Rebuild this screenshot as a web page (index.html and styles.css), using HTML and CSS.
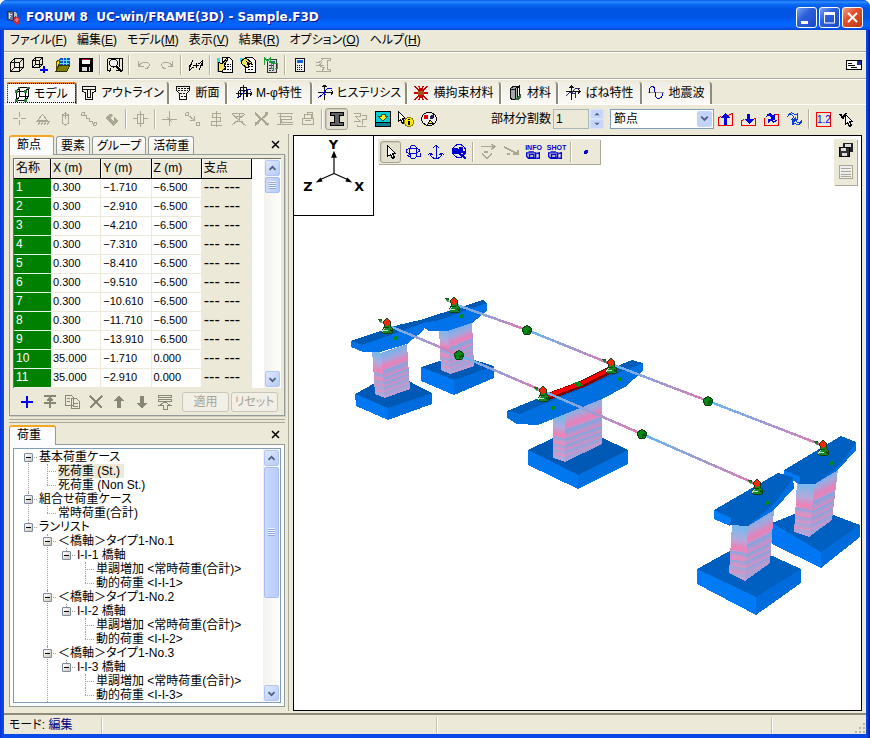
FILE: index.html
```html
<!DOCTYPE html>
<html lang="ja">
<head>
<meta charset="utf-8">
<title>FORUM 8 UC-win/FRAME(3D) - Sample.F3D</title>
<link rel="stylesheet" href="styles.css">
</head>
<body>
<div class="window">
<header class="titlebar">
  <svg class="ico" viewBox="0 0 16 16"><path d="M1 2l6 1v9l-6-2z" fill="#68738a" stroke="#27324c"/><path d="M3 4v6M3 5h3M3 7h2" stroke="#d7e4f5"/><path d="M8 3l3 1v4H8z" fill="#b7bfce"/><path d="M9 7l5 2v4l-3 3-4-3z" fill="#b52d46"/><path d="M10 9l3 1-2 4-2-2z" fill="#f06d7c"/></svg>
  <h1>FORUM 8&nbsp; UC-win/FRAME(3D) - Sample.F3D</h1>
  <div class="winbtns">
    <button aria-label="最小化"><svg viewBox="0 0 19 19"><path d="M4 13h7v3H4z" fill="#fff"/></svg></button>
    <button aria-label="最大化"><svg viewBox="0 0 19 19"><path d="M4.500 5v10h10V5z" fill="none" stroke="#fff"/><path d="M4 4h11v3H4z" fill="#fff"/></svg></button>
    <button class="close" aria-label="閉じる"><svg viewBox="0 0 19 19"><path d="M5 5l9 9M14 5l-9 9" stroke="#fff" stroke-width="2"/></svg></button>
  </div>
</header>
<div class="client">
<nav class="menubar">
  <a href="#">ファイル(<u>F</u>)</a><a href="#">編集(<u>E</u>)</a><a href="#">モデル(<u>M</u>)</a><a href="#">表示(<u>V</u>)</a><a href="#">結果(<u>R</u>)</a><a href="#">オプション(<u>O</u>)</a><a href="#">ヘルプ(<u>H</u>)</a>
</nav>
<div class="toolbar top">
  <button class="tb" aria-label="新規"><svg class="ico" viewBox="0 0 16 16"><path d="M1.500 5.500h9v9h-9zM5.500 1.500h9v9h-9zM1.500 5.500l4-4M10.500 5.500l4-4M10.500 14.500l4-4M1.500 14.500l4-4" fill="none" stroke="#000"/></svg></button>
  <button class="tb" aria-label="追加"><svg class="ico" viewBox="0 0 16 16"><path d="M.5 3.500h7v7h-7zM3.500.5h7v7h-7zM.5 3.500l3-3M7.500 3.500l3-3M.5 10.500l3-3M7.500 10.500l3-3" fill="none" stroke="#000"/><path d="M12 9v7M8 12.500h8" stroke="#0000e8" stroke-width="2"/></svg></button>
  <button class="tb" aria-label="開く"><svg class="ico" viewBox="0 0 16 16"><path d="M1 5l3-2v4l-3 6z" fill="#ffe800" stroke="#554f00"/><path d="M5 1h10v7H4z" fill="#2448d0"/><path d="M5 3.500h10M5 6h9M8 1v7M11.500 1v7" stroke="#55e5ff"/><path d="M1 14l3-6h11l-3 6z" fill="#808000" stroke="#333300"/></svg></button>
  <button class="tb" aria-label="保存"><svg class="ico" viewBox="0 0 16 16"><path d="M1 1h13l1 1v13H1z"/><path d="M4 2h8v5H4z" fill="#fff"/><path d="M4 2h8v1H4z" fill="#d00030"/><path d="M4 10h8v4H4z" fill="#ddd"/><path d="M9 10h2v4H9z"/></svg></button>
  <i class="sep"></i>
  <button class="tb" aria-label="プレビュー"><svg class="ico" viewBox="0 0 16 16"><path d="M.5 1.500h15v12H9M.5 1.500v12H4M12.500 2v8" fill="none" stroke="#000"/><circle cx="6.500" cy="6" r="4" fill="#eee" stroke="#000"/><path d="M9 9l6 6" stroke="#000" stroke-width="2"/><path d="M4 11l-2 4" stroke="#000"/></svg></button>
  <i class="sep"></i>
  <button class="tb off" aria-label="元に戻す"><svg class="ico" viewBox="0 0 16 16"><path d="M2.500 4v5h5M3 9c3-6 12-4 10 0-1 2-2 3-4 3" fill="none" stroke="#aaa793"/></svg></button>
  <button class="tb off" aria-label="やり直し"><svg class="ico" viewBox="0 0 16 16"><path d="M13.500 4v5h-5M13 9C10 3 1 5 3 9c1 2 2 3 4 3" fill="none" stroke="#aaa793"/></svg></button>
  <i class="sep"></i>
  <button class="tb" aria-label="符号"><svg class="ico" viewBox="0 0 16 16"><path d="M1 12l4-9M1.500 8v5l4-3M11 13l4-9M14.500 9V4l-4 3M5 8.500h6M8.500 6v5" fill="none" stroke="#000"/></svg></button>
  <i class="sep"></i>
  <button class="tb" aria-label="入力"><svg class="ico" viewBox="0 0 16 16"><path d="M5.500.5h7l3 3v12h-10z" fill="#fff" stroke="#000"/><path d="M7 7.500h7M7 9.500h7M7 12.500h7" stroke="#000" stroke-dasharray="2 1"/><path d="M0 1h3v14H0z" fill="#36d8e2"/><path d="M1 5l4 2 5-6 1 1-4 6 2 3-4 3H1z" fill="#f4e45b" stroke="#000"/></svg></button>
  <button class="tb" aria-label="出力"><svg class="ico" viewBox="0 0 16 16"><path d="M5.500.5h7l3 3v12h-10z" fill="#fff" stroke="#000"/><path d="M8 7.500h6M8 9.500h6M8 12.500h6" stroke="#000" stroke-dasharray="2 1"/><path d="M0 1h4v4H0z" fill="#36d8e2"/><path d="M1 4l5-3 6 5-2 1-3-2 2 5-2 1-5-4z" fill="#f4e45b" stroke="#000"/></svg></button>
  <button class="tb" aria-label="計算"><svg class="ico" viewBox="0 0 16 16"><path d="M4.500 2.500h9v13h-9z" fill="#ddd" stroke="#333"/><path d="M6 4h6v2H6z" fill="#267b7b"/><path d="M6 8.500h6M6 11.500h6M6 13.500h6" stroke="#333" stroke-dasharray="2 1"/><path d="M1.500 8V1l3 3 3-3v5M10.500 5v9M8 9c0-4 7-4 7 0s-7 4-7 0" fill="none" stroke="#16a338"/></svg></button>
  <i class="sep"></i>
  <button class="tb" aria-label="電卓"><svg class="ico" viewBox="0 0 16 16"><path d="M3.500 1.500h9v13h-9z" fill="#ececec" stroke="#111"/><path d="M5 3h6v3H5z" fill="#1264d8"/><path d="M5 8.500h6M5 10.500h6M5 12.500h6" stroke="#111" stroke-dasharray="1 1"/></svg></button>
  <button class="tb off" aria-label="断面計算"><svg class="ico" viewBox="0 0 16 16"><path d="M6 1.500h9v2h-3v9h3v2H6M1 5.500h3l4-3M1 8.500h8M1 14.500h6l2-4-4-1M7 5l-3 4" fill="none" stroke="#aaa793"/></svg></button>
  <button class="tb mail" aria-label="メール"><svg class="ico" viewBox="0 0 16 16"><path d="M.5 3.500h15v9H.5z" fill="#fff" stroke="#000"/><path d="M2 6.500h4M2 8.500h7M5 10.500h6" stroke="#000"/><path d="M11 4h4v4h-4z" fill="#1c2f9a"/></svg></button>
</div>
<div class="modes" role="tablist">
  <button class="mode on" role="tab"><svg class="ico" viewBox="0 0 16 16"><path d="M2.500 5.500h9v9h-9zM5.500 1.500h9v9h-9zM2.500 5.500l3-4M11.500 5.500l3-4M11.500 14.500l3-4M2.500 14.500l3-4" fill="none" stroke="#000"/><path d="M1 4h3v3H1zM10 4h3v3h-3zM1 13h3v3H1zM10 13h3v3h-3zM4 1h2v2H4zM13 1h3v2h-3z" fill="#27823c"/></svg>モデル</button>
  <button class="mode" role="tab"><svg class="ico" viewBox="0 0 16 16"><path d="M1 1.500h14M1.500 1v5l3 2v6h7V8l3-2V1M1.500 4.500h13M6.500 5v7h3V5" fill="none" stroke="#111"/></svg>アウトライン</button>
  <button class="mode" role="tab"><svg class="ico" viewBox="0 0 16 16"><path d="M1.500 1.500h13v4l-3 3v6h-7v-6l-3-3z" fill="none" stroke="#111"/><path d="M3 3.500h11M3 5.500h10M5 8.500h7M6 11.500h5" stroke="#111" stroke-dasharray="2 1"/></svg>断面</button>
  <button class="mode" role="tab"><svg class="ico" viewBox="0 0 16 16"><path d="M7.500 0v15M0 8.500h16M2.500 5.500h9v6M2.500 11V5.500M4.500 11.500v-9h6v9" fill="none" stroke="#111"/><path d="M1 13c5-2 5-8 14-9" fill="none" stroke="#0000a8"/><path d="M14 6l2 2.500-2 2" fill="none" stroke="#111"/></svg>M-φ特性</button>
  <button class="mode" role="tab"><svg class="ico" viewBox="0 0 16 16"><path d="M7.500 0v15M1 7.500h15M5.500 2l2-2 2 2M14 5l2 2.500-2 2" fill="none" stroke="#111"/><path d="M1 13l4-3 6-7h4M5 7l4 3" fill="none" stroke="#0000c8"/></svg>ヒステリシス</button>
  <button class="mode" role="tab"><svg class="ico" viewBox="0 0 16 16"><path d="M2 1l5 6M6 1l2 6M10 1L8 7M14 1L9 7M1 8h14M2 15l5-6M6 15l2-6M10 15L8 9M14 15L9 9" stroke="#c40000" stroke-width="1.500"/><path d="M5 6h6v4H5z" fill="#a6501e"/></svg>横拘束材料</button>
  <button class="mode" role="tab"><svg class="ico" viewBox="0 0 16 16"><path d="M3 4l4-3h5l-2 4v8l-4 2-3-2z" fill="#a7aaaa" stroke="#111"/><path d="M3 4.500h5.500v9M8 4l4-3v9" fill="none" stroke="#111"/><path d="M8 15l6-7v4l-3 3z" fill="#2d6b39"/></svg>材料</button>
  <button class="mode" role="tab"><svg class="ico" viewBox="0 0 16 16"><path d="M6.500 1v14M1 6.500h14M4.500 3l2-2 2 2M13 4l2 2.500-2 2" fill="none" stroke="#111"/><path d="M1 11l4-4 5 2M10.500 7v6M10 3.500h5M7 7l4-4" fill="none" stroke="#292963"/></svg>ばね特性</button>
  <button class="mode" role="tab"><svg class="ico" viewBox="0 0 16 16"><path d="M0 7.500h16" stroke="#999"/><path d="M1 8C1 0 7-1 7 7s6 9 8 1" fill="none" stroke="#0000c0"/></svg>地震波</button>
</div>
<div class="toolbar second">
  <button class="tb off" aria-label="節点"><svg class="ico" viewBox="0 0 16 16"><path d="M7.500 1v5M7.500 9v5M1 7.500h5M9 7.500h5" class="g"/></svg></button>
  <button class="tb off" aria-label="支点"><svg class="ico" viewBox="0 0 16 16"><path d="M7.500 3.500l5 6h-10zM1 10.500h14M3 14l2-3M6 14l2-3M9 14l2-3M12 14l2-3" class="g"/></svg></button>
  <button class="tb off" aria-label="剛体"><svg class="ico" viewBox="0 0 16 16"><path d="M4.500 4v8l3 2 3-2V4l-3-2zM4.500 4l3 1 3-1M7.500 2v6" class="g"/></svg></button>
  <button class="tb off" aria-label="ばね"><svg class="ico" viewBox="0 0 16 16"><circle cx="2" cy="3" r="1.500" class="g"/><circle cx="14" cy="13" r="1.500" class="g"/><path d="M3 4.500h2.500v3h3v3h3v2h2" class="g"/></svg></button>
  <button class="tb off" aria-label="塗り"><svg class="ico" viewBox="0 0 16 16"><path d="M1 7l5-4 3 1-3 3 4 3V6l5 4-6 5-5-5z" fill="#aaa793"/></svg></button>
  <i class="sep"></i>
  <button class="tb off" aria-label="要素"><svg class="ico" viewBox="0 0 16 16"><path d="M4.500 3.500h6v9h-6zM7.500 0v16M0 7.500h4M11 7.500h4" class="g"/></svg></button>
  <i class="sep"></i>
  <button class="tb off" aria-label="分割"><svg class="ico" viewBox="0 0 16 16"><path d="M7.500 0v15M0 8.500h15M5 6l5 5" class="g"/></svg></button>
  <button class="tb off" aria-label="移動"><svg class="ico" viewBox="0 0 16 16"><circle cx="2" cy="3" r="1.500" class="g"/><circle cx="13" cy="13" r="2" class="g"/><path d="M3 4l6 5M5 9.500h4.500V5" class="g"/></svg></button>
  <button class="tb off" aria-label="接続"><svg class="ico" viewBox="0 0 16 16"><path d="M13 2.500H4.500v4h8v4h-9v4h10M8.500 0v16" class="g"/></svg></button>
  <button class="tb off" aria-label="反転"><svg class="ico" viewBox="0 0 16 16"><path d="M1 2.500h12M1 14L14 3M1 3l14 12M4 5.500h8M5 10.500h7M8.500 2v8" class="g"/></svg></button>
  <button class="tb off" aria-label="交差"><svg class="ico" viewBox="0 0 16 16"><path d="M1 2l13 12M1 14L14 2M11 2h3M11 13h4M1 12h4" class="g" stroke-width="2"/></svg></button>
  <button class="tb off" aria-label="表"><svg class="ico" viewBox="0 0 16 16"><path d="M0 2.500h16M0 13.500h16M3.500 2v12M2 5.500h12.500v3H4.500v3h11" class="g"/></svg></button>
  <button class="tb off" aria-label="保管"><svg class="ico" viewBox="0 0 16 16"><path d="M2.500 7.500h11v6h-11zM4.500 7V3.500h7V7M7.500 3V1.500h5V7M5 9.500h6" class="g"/></svg></button>
  <i class="sep"></i>
  <button class="tb pressed" aria-label="断面表示"><svg class="ico" viewBox="0 0 16 16"><path d="M1.500 1.500h13v3h-4v7h4v3h-13v-3h4v-7h-4z" fill="#5f6264" stroke="#000"/></svg></button>
  <button class="tb off" aria-label="荷重表示"><svg class="ico" viewBox="0 0 16 16"><path d="M2 2.500h6v3H4l4 5H2M10 4.500h4v4h-4v5M5 13.500v2h9" class="g"/></svg></button>
  <button class="tb" aria-label="ダウンロード"><svg class="ico" viewBox="0 0 16 16"><path d="M.5.5h15v11H.5z" fill="#00cfd5" stroke="#000"/><path d="M.5 11.500h15v4H.5z" fill="#087e98" stroke="#000"/><path d="M6 3h4v2h3L8 10 3 5h3z" fill="#fff318" stroke="#444"/></svg></button>
  <button class="tb" aria-label="情報"><svg class="ico" viewBox="0 0 16 16"><path d="M.5.5v10l2-2 2 4 2-1-2-4h3z" fill="#fff" stroke="#000"/><circle cx="11" cy="11" r="4.500" fill="#ffec00" stroke="#887900"/><path d="M10 8h2v1h-2zM10 10h2v4h-2z"/></svg></button>
  <button class="tb" aria-label="表示設定"><svg class="ico" viewBox="0 0 16 16"><ellipse cx="8" cy="8" rx="7.500" ry="6.500" fill="#eee" stroke="#000"/><path d="M3 4h4v4H3z" fill="#d00"/><circle cx="11" cy="6" r="2" fill="#225"/><path d="M7 13l2-4 3 3z" fill="#ffe000" stroke="#000"/></svg></button>
  <label class="divlabel" for="division">部材分割数</label>
  <div class="spin"><input id="division" type="text" value="1" readonly><div class="spinbtns"><button aria-label="増やす"><svg viewBox="0 0 12 9"><path d="M3 6l3-3 3 3z" fill="#4d6185"/></svg></button><button aria-label="減らす"><svg viewBox="0 0 12 9"><path d="M3 3l3 3 3-3z" fill="#4d6185"/></svg></button></div></div>
  <div class="combo"><select aria-label="対象"><option>節点</option></select><svg class="arrow" viewBox="0 0 15 17"><path d="M4 6l3.500 3.500L11 6" fill="none" stroke="#4d6185" stroke-width="2"/></svg></div>
  <div class="steps">
    <button class="tb" aria-label="上へ"><svg class="ico" viewBox="0 0 16 16"><path d="M.5 6v8.500h14V2.500l-5 2M.5 6.500l3-1" fill="none" stroke="#e00"/><path d="M7.500 2l5 5H9v7H6V7H3z" fill="#0000e0"/></svg></button>
    <button class="tb" aria-label="下へ"><svg class="ico" viewBox="0 0 16 16"><path d="M.5 9v5.500h14V7.500l-3 1M.5 9.500l3-1" fill="none" stroke="#e00"/><path d="M6 3h3v5h4l-5 5-5-5h3z" fill="#0000e0"/></svg></button>
    <button class="tb" aria-label="循環"><svg class="ico" viewBox="0 0 16 16"><path d="M.5 7v7.500h14V3.500h-4" fill="none" stroke="#e00"/><path d="M2 6c1-4 5-5 7-2l2-1v6H5l2-2C5 4 4 4 2 6zM14 7c-1 5-5 6-7 3l-3 2V8h5l-1 1c2 2 4 1 6-2z" fill="#0000e0"/></svg></button>
    <button class="tb" aria-label="更新"><svg class="ico" viewBox="0 0 16 16"><path d="M1 5c1-4 5-4 7-1l2-1v5H5l2-2C5 3 3 3 1 5zM15 9c-1 5-5 6-7 3l-3 2V8h5l-1 2c2 2 4 2 6-1z" fill="none" stroke="#0c3ed8"/><path d="M6 8l3-2v2zM6 9l3 0-3 3z" fill="#0c3ed8"/></svg></button>
    <i class="sep"></i>
    <button class="tb" aria-label="小数"><span class="decimal">1.2</span></button>
    <button class="tb" aria-label="選択確定"><svg class="ico" viewBox="0 0 16 16"><path d="M1 3l3 4 3-5" fill="none" stroke="#000" stroke-width="2"/><path d="M6.500 3.500l7 7h-3l2 4-2 1-2-4-2 2z" fill="#fff" stroke="#000"/></svg></button>
  </div>
</div>
<main class="work">
  <aside class="side">
    <section class="panel nodes">
      <div class="ptabs"><button class="ptab on">節点</button><button class="ptab">要素</button><button class="ptab">グループ</button><button class="ptab">活荷重</button><button class="x" aria-label="閉じる"><svg viewBox="0 0 9 9"><path d="M1 1l7 7M8 1L1 8" stroke="#000" stroke-width="1.500"/></svg></button></div>
      <div class="pbody">
        <div class="gridbox">
          <table>
            <colgroup><col class="cn"><col><col><col><col></colgroup>
            <thead><tr><th>名称</th><th>X (m)</th><th>Y (m)</th><th>Z (m)</th><th>支点</th></tr></thead>
            <tbody>
            <tr><th>1</th><td>0.300</td><td>−1.710</td><td>−6.500</td><td>--- ---</td></tr>
            <tr><th>2</th><td>0.300</td><td>−2.910</td><td>−6.500</td><td>--- ---</td></tr>
            <tr><th>3</th><td>0.300</td><td>−4.210</td><td>−6.500</td><td>--- ---</td></tr>
            <tr><th>4</th><td>0.300</td><td>−7.310</td><td>−6.500</td><td>--- ---</td></tr>
            <tr><th>5</th><td>0.300</td><td>−8.410</td><td>−6.500</td><td>--- ---</td></tr>
            <tr><th>6</th><td>0.300</td><td>−9.510</td><td>−6.500</td><td>--- ---</td></tr>
            <tr><th>7</th><td>0.300</td><td>−10.610</td><td>−6.500</td><td>--- ---</td></tr>
            <tr><th>8</th><td>0.300</td><td>−11.710</td><td>−6.500</td><td>--- ---</td></tr>
            <tr><th>9</th><td>0.300</td><td>−13.910</td><td>−6.500</td><td>--- ---</td></tr>
            <tr><th>10</th><td>35.000</td><td>−1.710</td><td>0.000</td><td>--- ---</td></tr>
            <tr><th>11</th><td>35.000</td><td>−2.910</td><td>0.000</td><td>--- ---</td></tr>
            </tbody>
          </table>
          <div class="scroll"><button class="sb" aria-label="上"><svg viewBox="0 0 15 15"><path d="M4 9l3.500-3.500L11 9" fill="none" stroke="#4d6185" stroke-width="2"/></svg></button><div class="thumb short"><i class="grip"></i></div><button class="sb down" aria-label="下"><svg viewBox="0 0 15 15"><path d="M4 6l3.500 3.500L11 6" fill="none" stroke="#4d6185" stroke-width="2"/></svg></button></div>
        </div>
        <div class="actions">
          <button class="tb" aria-label="追加"><svg class="ico" viewBox="0 0 16 16"><path d="M8 2v12M2 8h12" stroke="#0000e8" stroke-width="2"/></svg></button>
          <button class="tb off" aria-label="挿入"><svg class="ico" viewBox="0 0 16 16"><path d="M2 2h12M2 9h12M8 4v10M5 7l3-3 3 3" class="d"/></svg></button>
          <button class="tb off" aria-label="コピー"><svg class="ico" viewBox="0 0 16 16"><path d="M.5 1.500h6l2 2v8h-8zM6.500 4.500h5l3 3v7h-8zM2 4.500h3M2 7.500h3M8 9.500h5M8 12.500h5" fill="none" stroke="#888675"/></svg></button>
          <button class="tb off" aria-label="削除"><svg class="ico" viewBox="0 0 16 16"><path d="M2 2l12 12M14 2L2 14" class="d"/></svg></button>
          <button class="tb off" aria-label="上へ移動"><svg class="ico" viewBox="0 0 16 16"><path d="M8 1l5 6h-3v7H6V7H3z" fill="#888675"/></svg></button>
          <button class="tb off" aria-label="下へ移動"><svg class="ico" viewBox="0 0 16 16"><path d="M8 15l5-6h-3V2H6v7H3z" fill="#888675"/></svg></button>
          <button class="tb off" aria-label="貼り付け"><svg class="ico" viewBox="0 0 16 16"><path d="M1.500 1.500h13v2h-13zM1.500 5.500h13v2h-13zM3 11l5-3 5 3h-3v4H6v-4z" fill="none" stroke="#888675"/></svg></button>
          <button class="push" disabled>適用</button><button class="push" disabled>リセット</button>
        </div>
      </div>
    </section>
    <section class="panel loads">
      <div class="ptabs"><button class="ptab on">荷重</button><button class="x" aria-label="閉じる"><svg viewBox="0 0 9 9"><path d="M1 1l7 7M8 1L1 8" stroke="#000" stroke-width="1.500"/></svg></button></div>
      <div class="pbody">
        <div class="treebox">
          <ul class="tree">
            <li><button class="exp" aria-label="折りたたむ"></button>基本荷重ケース
              <ul><li><span class="sel">死荷重 (St.)</span></li><li>死荷重 (Non St.)</li></ul></li>
            <li><button class="exp" aria-label="折りたたむ"></button>組合せ荷重ケース
              <ul><li>常時荷重(合計)</li></ul></li>
            <li><button class="exp" aria-label="折りたたむ"></button>ランリスト
              <ul>
                <li><button class="exp" aria-label="折りたたむ"></button><span class="wide">＜橋軸＞</span>タイプ1-No.1
                  <ul><li><button class="exp" aria-label="折りたたむ"></button>I-I-1 橋軸<ul><li>単調増加 &lt;常時荷重(合計)&gt;</li><li>動的荷重 &lt;I-I-1&gt;</li></ul></li></ul></li>
                <li><button class="exp" aria-label="折りたたむ"></button><span class="wide">＜橋軸＞</span>タイプ1-No.2
                  <ul><li><button class="exp" aria-label="折りたたむ"></button>I-I-2 橋軸<ul><li>単調増加 &lt;常時荷重(合計)&gt;</li><li>動的荷重 &lt;I-I-2&gt;</li></ul></li></ul></li>
                <li class="more"><button class="exp" aria-label="折りたたむ"></button><span class="wide">＜橋軸＞</span>タイプ1-No.3
                  <ul><li><button class="exp" aria-label="折りたたむ"></button>I-I-3 橋軸<ul><li>単調増加 &lt;常時荷重(合計)&gt;</li><li>動的荷重 &lt;I-I-3&gt;</li></ul></li></ul></li>
              </ul></li>
          </ul>
          <div class="scroll"><button class="sb" aria-label="上"><svg viewBox="0 0 15 15"><path d="M4 9l3.500-3.500L11 9" fill="none" stroke="#4d6185" stroke-width="2"/></svg></button><div class="thumb long"><i class="grip"></i></div><button class="sb down" aria-label="下"><svg viewBox="0 0 15 15"><path d="M4 6l3.500 3.500L11 6" fill="none" stroke="#4d6185" stroke-width="2"/></svg></button></div>
        </div>
      </div>
    </section>
  </aside>
  <section class="view">
    <svg class="scene" viewBox="294 136 567 574" preserveAspectRatio="xMinYMin meet">
      <defs>
        <linearGradient id="cr" x1="0" y1="0" x2=".2" y2="1">
          <stop offset=".1" stop-color="#62b2f0"/><stop offset=".3" stop-color="#a0a8de"/><stop offset=".42" stop-color="#ea7fb8"/><stop offset=".48" stop-color="#cf92c8"/><stop offset=".49" stop-color="#7fa6e0"/><stop offset=".57" stop-color="#b497cf"/><stop offset=".61" stop-color="#e286bd"/><stop offset=".62" stop-color="#7fa8de"/><stop offset=".7" stop-color="#d290c6"/><stop offset=".71" stop-color="#85a6dc"/><stop offset=".79" stop-color="#d290c6"/><stop offset=".8" stop-color="#8aa6dc"/><stop offset=".88" stop-color="#cc95ca"/><stop offset=".89" stop-color="#9ba3d8"/><stop offset="1" stop-color="#c99ccf"/>
        </linearGradient>
        <linearGradient id="cl" x1="0" y1="0" x2="-.05" y2="1">
          <stop offset=".05" stop-color="#7cb8ec"/><stop offset=".25" stop-color="#b4a9dd"/><stop offset=".4" stop-color="#f080b6"/><stop offset=".46" stop-color="#d193c8"/><stop offset=".47" stop-color="#86a8df"/><stop offset=".55" stop-color="#dc92c4"/><stop offset=".61" stop-color="#e48bbf"/><stop offset=".62" stop-color="#93a7dc"/><stop offset=".72" stop-color="#e092c4"/><stop offset=".73" stop-color="#9aa9da"/><stop offset=".84" stop-color="#e092c4"/><stop offset=".85" stop-color="#a3aadc"/><stop offset="1" stop-color="#dc9ccf"/>
        </linearGradient>
        <linearGradient id="ln" x1="0" x2="1"><stop offset="0" stop-color="#64b8f4"/><stop offset=".5" stop-color="#9c9bd4"/><stop offset="1" stop-color="#e478b4"/></linearGradient>
        <g id="dia"><path d="M0-5l5 4-2 5-3 1-3-1-2-5z" fill="#008c14" stroke="#123d12"/><path d="M0 0l4-1-2 4-2 1z" fill="#005f0c"/></g>
        <g id="bear"><path d="M-9-5l4 0-1 4zM-5-2l3 1" fill="#0a8d1a" stroke="#134a14" stroke-width=".5"/><path d="M0-6l4 4-1 4 3 3-1 4h-9l-1-2 3-5-2-4z" fill="#178625" stroke="#174017"/><path d="M-3-3l3-2 3 2v3l-3 2-3-2z" fill="#ee2a0c"/><path d="M-3 6h4M-5 8l3-4" stroke="#bce2c5"/><path d="M-3 3l5 0M3 5l2 3" stroke="#004e08"/></g>
      </defs>
      <g fill="#005ab5">
        <path d="M421 367l37-12 36 11-40 14z"/><path d="M355 394l38-21 39 20-44 15z"/><path d="M528 450l50-24 50 24-50 25z"/>
      </g>
      <path d="M421 367l33 13 40-14v12l-40 17-33-14z" fill="#0077f2"/><path d="M454 380l40-14v12l-40 17z" fill="#006bdc"/>
      <path d="M439 328l9 3 2 43-9-4z" fill="url(#cl)"/><path d="M448 331l24-9 2 44-24 8z" fill="url(#cr)"/>
      <path d="M421 320l62-20 4 3v8l-15 12-25 8h-18l-9-6z" fill="#0073ea"/><path d="M420 320l63-20 4 3-47 17-18 3z" fill="#005ab5"/>
      <path d="M355 394l33 14 44-15v11l-44 16-32-14z" fill="#0077f2"/><path d="M388 408l44-15v11l-44 16z" fill="#006bdc"/>
      <path d="M372 350l9 3 4 45-10-4z" fill="url(#cl)"/><path d="M381 353l26-9 3 45-25 9z" fill="url(#cr)"/>
      <path d="M351 341l68-20 5 3v6l-17 14-27 8h-17l-12-5z" fill="#0073ea"/><path d="M351 341l47-16 22-5 3 3-18 7-43 15z" fill="#005ab5"/>
      <path d="M528 450l50 25 50-25v14l-50 25-50-24z" fill="#006fe0"/><path d="M528 450l50 25v14l-50-24z" fill="#0077ee"/>
      <path d="M553 416l12-2v48l-12-4z" fill="url(#cl)"/><path d="M565 414l37-17v47l-37 18z" fill="url(#cr)"/>
      <path d="M507 411l125-51 11 3v8l-18 16-23 12-64 26-21-1-10-6z" fill="#006fe0"/><path d="M507 411l125-51 11 3-123 51z" fill="#005cb8"/>
      <path d="M772 523l40-16 48 18-39 27z" fill="#0060c2"/><path d="M772 523l49 29v16l-49-24z" fill="#0077f2"/><path d="M821 552l39-27v12l-39 31z" fill="#006bdc"/>
      <path d="M797 482l18 1-6 54-15-5z" fill="url(#cl)"/><path d="M815 483l23-14-6 51-23 17z" fill="url(#cr)"/>
      <path d="M784 470l57-34 15 6v6l-18 22-23 14h-15l-16-9z" fill="#0060c2"/><path d="M784 470l16 7-1 7-15-9z" fill="#007bf5"/><path d="M856 442v8l-18 20-23 14 26-20z" fill="#006fe0"/>
      <path d="M697 569l47-26 57 26-45 28z" fill="#0060c2"/><path d="M697 569l59 28v18l-59-31z" fill="#007bf5"/><path d="M756 597l45-28v14l-45 32z" fill="#006bdc"/>
      <path d="M732 524l16 2-3 55-16-8z" fill="url(#cl)"/><path d="M748 526l26-17-4 54-25 18z" fill="url(#cr)"/>
      <path d="M714 510l64-37 15 4 1 11-20 22-26 16-18-1-16-8z" fill="#0060c2"/><path d="M714 510l17 8-1 8-16-7z" fill="#007bf5"/><path d="M793 478l1 10-20 22-26 16 27-23z" fill="#006fe0"/>
      <path d="M547 397l35-13 30-15" fill="none" stroke="#700" stroke-width="7"/><path d="M547 396l35-13 30-15" fill="none" stroke="#f00" stroke-width="4"/>
      <g stroke="url(#ln)" stroke-width="2.500">
        <path d="M387 325l72 30"/><path d="M459 355l84 36"/><path d="M543 391l99 43"/><path d="M642 434l114 50"/>
        <path d="M454 304l73 26"/><path d="M527 330l84 34"/><path d="M611 364l97 37"/><path d="M708 401l114 44"/>
      </g>
      <g fill="#008c14"><circle cx="396" cy="338" r="2"/><circle cx="462" cy="316" r="2"/><circle cx="553" cy="408" r="2"/><circle cx="620" cy="379" r="2"/><circle cx="767" cy="503" r="2"/><circle cx="832" cy="463" r="2"/><path d="M574 383l5-2 4 5-6 1z"/></g>
      <use href="#dia" x="459" y="355"/><use href="#dia" x="527" y="330"/><use href="#dia" x="642" y="434"/><use href="#dia" x="708" y="401"/>
      <use href="#bear" x="387" y="324"/><use href="#bear" x="454" y="303"/><use href="#bear" x="543" y="392"/><use href="#bear" x="611" y="364"/><use href="#bear" x="757" y="485"/><use href="#bear" x="823" y="446"/>
    </svg>
    <div class="axis">
      <svg viewBox="0 0 80 80"><path d="M40.500 38V18M40.500 38l-16 7M40.500 38l16 7" stroke="#000" stroke-width="1.200"/><path d="M40.500 15l3 7h-6zM22 47l5-5 2 4zM59 47l-5-5-2 4z"/><text x="40" y="13">Y</text><text x="14" y="56">Z</text><text x="66" y="56">X</text></svg>
    </div>
    <div class="float viewtools">
      <button class="tb pressed" aria-label="選択"><svg class="ico" viewBox="0 0 16 16"><path d="M4.500 1.500v11l3-2 2 4 2-1-2-4h3z" fill="#fff" stroke="#000"/></svg></button>
      <button class="tb" aria-label="回転"><svg class="ico b" viewBox="0 0 16 16"><path d="M8 1c5 0 5 14 0 14M8 15C4 15 3 1 8 1M1 7c0-3 13-4 14 0M1 7c0 3 8 4 14 0M2 11l3 2 0-4M12 12h3v-3"/></svg></button>
      <button class="tb" aria-label="移動"><svg class="ico b" viewBox="0 0 16 16"><path d="M8.500 15V2M5 4l3-3 3 3M2 9c0 4 3 5 6 6 3-1 6-2 6-6M0 11l2-2 3 2M11 11l3-2 2 2"/></svg></button>
      <button class="tb" aria-label="拡大"><svg class="ico b" viewBox="0 0 16 16"><circle cx="8" cy="7" r="6.500"/><circle cx="5" cy="7" r="2.500" fill="#0000d0"/><circle cx="10" cy="5" r="2" fill="#0000d0"/><path d="M8 9l3-2 3 2-3 3zM11 11l4 4" stroke-width="2"/></svg></button>
      <i class="sep"></i>
      <button class="tb off" aria-label="走行"><svg class="ico" viewBox="0 0 16 16"><path d="M1 2.500h14M11 0l4 2.500-4 3M2 10l5 4 5-4M4 8h4" class="g" stroke-width="1.500"/></svg></button>
      <button class="tb off" aria-label="経路"><svg class="ico" viewBox="0 0 16 16"><path d="M1 3l14 7M10 10h5V6M4 10h3" class="g" stroke-width="1.500"/></svg></button>
      <button class="tb" aria-label="情報"><span class="cam"><span>INFO</span><svg class="b" viewBox="0 0 16 10"><path d="M1 2h10v6H3L1 6zM12 3l3-1v6h-3M4 4h5v3H4zM3 0h6" stroke-width="1.500"/></svg></span></button>
      <button class="tb" aria-label="撮影"><span class="cam"><span>SHOT</span><svg class="b" viewBox="0 0 16 10"><path d="M1 2h10v6H3L1 6zM12 3l3-1v6h-3M4 4h5v3H4zM3 0h6" stroke-width="1.500"/></svg></span></button>
      <i class="sep"></i>
      <button class="tb" aria-label="点"><svg class="ico" viewBox="0 0 16 16"><circle cx="8" cy="8" r="2" fill="#0000d0"/></svg></button>
    </div>
    <div class="float sidetools">
      <button class="tb" aria-label="保存"><svg class="ico" viewBox="0 0 16 16"><path d="M5 1h10v9H5z" fill="#222"/><path d="M7 2h6v3H7z" fill="#ddd"/><path d="M1 5h10v9H1z" fill="#333" stroke="#000"/><path d="M3 6h5v3H3zM4 11h5v3H4z" fill="#ddd"/></svg></button>
      <button class="tb off" aria-label="一覧"><svg class="ico" viewBox="0 0 16 16"><path d="M1.500 1.500h13v13h-13zM3 4.500h10M3 7.500h10M3 10.500h10M3 12.500h10" fill="#eee" stroke="#aaa793"/></svg></button>
    </div>
  </section>
</main>
<footer class="status"><div>モード: <span>編集</span></div><div></div><div></div><div class="size"><svg viewBox="0 0 12 12"><path d="M9 1h2v2H9zM5 5h2v2H5zM9 5h2v2H9zM1 9h2v2H1zM5 9h2v2H5zM9 9h2v2H9z" fill="#b8b4a2"/></svg></div></footer>
</div>
</div>
</body>
</html>
```
FILE: styles.css
```css
* { box-sizing: border-box; }
body {
  margin: 0;
  background: #fff;
  color: #000;
  font: 12px/14px "Liberation Sans", "Noto Sans CJK JP", sans-serif;
  font-feature-settings: "palt";
}
button, input, select { font: inherit; font-feature-settings: inherit; color: inherit; margin: 0; padding: 0; border: 0; background: none; border-radius: 0; }
svg { display: block; }
.window {
  display: flex; flex-direction: column; height: 100vh; overflow: hidden;
  padding: 0 4px 4px; border-radius: 7px 7px 0 0;
  background: linear-gradient(90deg, #0831d9, #0c4be8 3px, #0b45e3 calc(100% - 3px), #00138c);
}
.titlebar {
  display: flex; align-items: center; flex: 0 0 30px;
  margin: 0 -4px; padding: 4px 7px 0 6px;
  background: linear-gradient(#0058e6, #2f8dff 2px, #0b6bf4 4px, #0054e3 9px, #0055e5 17px, #0262fc 22px, #0566ff 26px, #0046d8);
}
.titlebar h1 { flex: 1; margin: 0 0 0 4px; color: #fff; font: bold 12px/16px "DejaVu Sans", sans-serif; text-shadow: 1px 1px #0f1089; white-space: nowrap; }
.ico { width: 16px; height: 16px; shape-rendering: crispEdges; }
.winbtns { display: flex; gap: 2px; }
.winbtns button { width: 21px; height: 21px; border: 1px solid #fff; border-radius: 3px; background: linear-gradient(135deg, #7ba2f5, #2d5fdc 40%, #1c48c8); }
.winbtns .close { background: linear-gradient(135deg, #f0a088, #e2502a 40%, #b93a12); }
.client { display: flex; flex-direction: column; flex: 1; min-height: 0; background: #ece9d8; }
.menubar { display: flex; gap: 10px; height: 22px; padding: 3px 6px 0; border-bottom: 1px solid #aca899; box-shadow: 0 1px #fff; }
.menubar a { color: #000; text-decoration: none; white-space: nowrap; }
.toolbar { display: flex; align-items: center; }
.top { height: 27px; padding: 0 1px; border-bottom: 1px solid #aca899; }
.tb { display: flex; align-items: center; justify-content: center; flex: none; width: 23px; height: 22px; }
.tb.pressed { border: 1px solid #a5a292; border-radius: 3px; background: #e2dfcf; box-shadow: inset 1px 1px #cfccbc; }
.sep { flex: none; width: 2px; height: 20px; margin: 0 2px; border-left: 1px solid #b5b19f; border-right: 1px solid #fff; }
.mail { margin-left: auto; }
.g { fill: none; stroke: #aaa793; }
.d { fill: none; stroke: #888675; stroke-width: 2; }
.b { fill: none; stroke: #0000d0; }
.modes { display: grid; grid-template-columns: 71px 92px 58px 85px 95px 94px 57px 84px 70px; height: 25px; padding: 2px 0 0 2px; border-top: 1px solid #fff; }
.mode { display: flex; align-items: center; justify-content: center; gap: 4px; height: 22px; background: linear-gradient(#efede2, #fbfaf6); border-left: 1px solid #fff; border-right: 2px solid #8e8c7c; border-radius: 3px 3px 0 0; white-space: nowrap; }
.mode.on { background: #fbfbfa; border-top: 2px solid #e5822c; outline: 1px dotted #000; outline-offset: -2px; }
.second { height: 29px; padding: 0 2px 0 4px; border-top: 1px solid #fff; }
.divlabel { margin-left: 51px; white-space: nowrap; }
.spin { display: flex; width: 52px; height: 20px; margin-left: 2px; }
.spin input { width: 36px; min-width: 0; padding: 0 2px; border: 1px solid #a9b8bb; background: #ece9d8; }
.spinbtns { display: flex; flex-direction: column; width: 14px; margin-left: 1px; }
.spinbtns button { flex: 1; min-height: 0; border: 1px solid #d9e2fb; border-radius: 2px; background: #c7d5fa; }
.spinbtns svg { width: 12px; height: 8px; }
.combo { position: relative; width: 104px; height: 20px; margin-left: 5px; }
.combo select { width: 100%; height: 100%; padding: 0 3px; appearance: none; border: 1px solid #7f9db9; background: #fff; }
.arrow { position: absolute; top: 2px; right: 2px; width: 15px; height: 16px; border-radius: 2px; background: #c4d3fa; pointer-events: none; }
.steps { display: flex; align-items: center; }
.decimal { width: 15px; height: 15px; border: 1px solid #f00; color: #00d; font-size: 10px; line-height: 13px; text-align: center; }
.work { display: flex; flex: 1; min-height: 0; padding: 1px 4px 2px 5px; }
.side { display: flex; flex-direction: column; flex: 0 0 280px; min-height: 0; padding-right: 3px; border-right: 1px solid #aca899; }
.panel { display: flex; flex-direction: column; }
.nodes { padding-bottom: 3px; border-bottom: 1px solid #aca899; }
.loads { flex: 1; min-height: 0; margin: 2px 0 4px; padding-top: 2px; border-top: 1px solid #aca899; }
.ptabs { display: flex; align-items: flex-end; gap: 2px; height: 20px; }
.loads .ptabs { height: 19px; }
.ptab { height: 18px; padding: 0 4px; border: 1px solid #919b9c; border-bottom: 0; border-radius: 3px 3px 0 0; background: linear-gradient(#fff, #f0eee4); white-space: nowrap; }
.ptab.on { position: relative; z-index: 1; height: 20px; margin-bottom: -1px; padding: 0 14px 2px 7px; border-top: 2px solid #f5a623; background: #fcfcfe; }
.nodes .ptab.on { padding-right: 12px; }
.x { align-self: center; width: 9px; height: 9px; margin: 0 5px 0 auto; }
.x svg { width: 9px; height: 9px; }
.pbody { border: 1px solid #919b9c; background: #fcfcfe; padding: 3px; }
.nodes .pbody { padding-bottom: 0; box-shadow: 1px 1px #d0cdbd; background: #ece9d8; }
.loads .pbody { flex: 1; min-height: 0; }
.gridbox { display: flex; justify-content: space-between; overflow: hidden; border: 1px solid #716f64; border-width: 1px 0 0 1px; background: #fff; }
table { width: 238px; border-collapse: separate; border-spacing: 0; table-layout: fixed; font-size: 11px; }
.cn { width: 37px; }
th, td { height: 19px; padding: 0 0 2px 2px; text-align: left; font-weight: normal; white-space: nowrap; overflow: hidden; }
thead th { height: 20px; font-size: 12px; background: #ece9d8; border: 1px solid #000; border-width: 0 1px 1px 0; box-shadow: inset 1px 1px #fff; }
tbody th { background: #008000; color: #fff; border-bottom: 1px solid #e8f5e8; font-size: 12px; }
td { border: 1px solid #ece9d8; border-width: 0 1px 1px 0; }
td:last-child { background: #ece9d8; font-size: 16px; }
.scroll { display: flex; flex-direction: column; flex: 0 0 17px; gap: 1px; padding: 1px; background: linear-gradient(90deg, #f3f1ec, #fefefb); }
.sb { width: 15px; height: 16px; border: 1px solid #b0c4f5; border-radius: 2px; background: linear-gradient(135deg, #dfe8fe, #b8cbf6); }
.sb svg { width: 13px; height: 13px; }
.down { margin-top: auto; }
.thumb { display: flex; align-items: center; justify-content: center; border: 1px solid #a8bdf2; border-radius: 2px; background: linear-gradient(90deg, #cbdafd, #bacbf8); }
.short { height: 16px; }
.long { flex: 0 0 52%; }
.grip { width: 7px; height: 8px; background: repeating-linear-gradient(#eef3fe 0 1px, #8fa8e0 1px 2px); }
.actions { display: flex; align-items: center; height: 27px; padding-left: 2px; }
.push { width: 47px; height: 20px; margin-left: 2px; border: 1px solid #c9c7ba; border-radius: 3px; background: #f2f0e6; color: #a7a492; }
.actions .tb + .push { margin-left: 6px; }
.treebox { display: flex; height: 100%; overflow: hidden; border: 1px solid #7f9db9; background: #fff; }
.tree { flex: 1; min-width: 0; padding: 1px 0 0 5px; }
ul { margin: 0; padding: 0; list-style: none; }
.tree ul { margin-left: -1px; }
.tree li { position: relative; padding-left: 20px; white-space: nowrap; }
.tree li::before { content: ""; position: absolute; left: 9px; top: 0; bottom: 0; border-left: 1px dotted #a0a0a0; }
.tree li:last-child::before { bottom: auto; height: 7px; }
.tree li.more::before { bottom: 0; height: auto; }
.tree > li:first-child::before { top: 7px; }
.tree li::after { content: ""; position: absolute; left: 9px; top: 7px; width: 9px; border-top: 1px dotted #a0a0a0; }
.exp { position: absolute; z-index: 1; left: 5px; top: 3px; width: 9px; height: 9px; border: 1px solid #7b8a9e; border-radius: 1px; background: linear-gradient(#000, #000) center / 5px 1px no-repeat, linear-gradient(135deg, #fff, #cdc9bb); }
.sel { display: inline-block; padding-right: 4px; background: #ece9d8; }
.wide { font-feature-settings: normal; }
.view { position: relative; flex: 1; min-width: 0; margin: 1px 0 0 4px; border: 1px solid #000; background: #fff; overflow: hidden; }
.scene { width: 100%; height: 100%; shape-rendering: crispEdges; }
.axis { position: absolute; left: 0; top: 0; width: 80px; height: 80px; border: 1px solid #000; border-width: 0 1px 1px 0; background: #fff; }
.axis text { font: bold 13px "DejaVu Sans", sans-serif; text-anchor: middle; }
.float { position: absolute; display: flex; background: #ece9d8; box-shadow: 1px 1px #aca899; }
.viewtools { left: 84px; top: 3px; align-items: center; height: 25px; padding: 0 3px 0 2px; }
.viewtools .pressed { width: 21px; }
.sidetools { right: 4px; top: 3px; flex-direction: column; height: 46px; }
.cam { color: #0000d0; font: bold 7px/7px "Liberation Sans", sans-serif; }
.cam svg { width: 16px; height: 9px; }
.status { display: grid; grid-template-columns: 99px 335px 1fr 93px; height: 21px; padding-top: 2px; border-top: 2px solid #8f8c7c; }
.status div { padding: 1px 5px; border-right: 1px solid #fff; box-shadow: inset -1px 0 #c5c2b2; }
.status span { color: #000080; }
.status .size { display: flex; align-items: flex-end; justify-content: flex-end; padding: 0; border: 0; box-shadow: none; }
.size svg { width: 12px; height: 12px; }
```
